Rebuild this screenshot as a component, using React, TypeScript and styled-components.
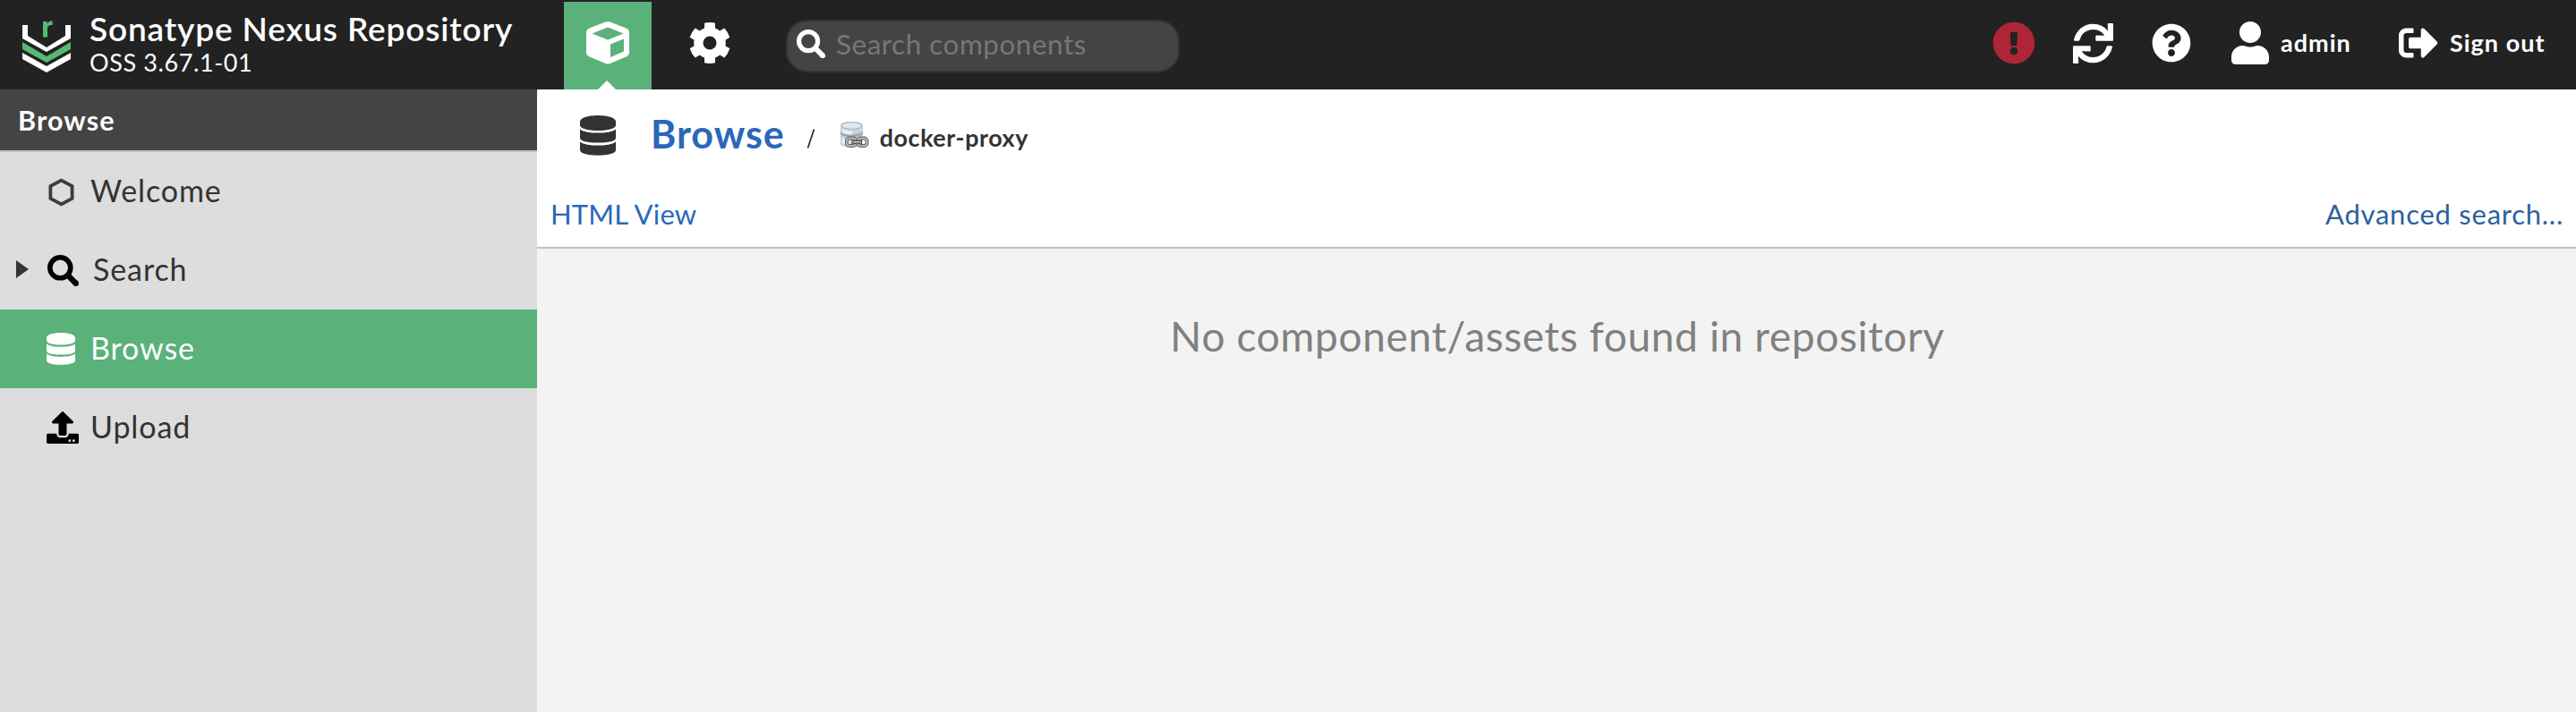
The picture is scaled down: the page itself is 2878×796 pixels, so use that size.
import React from "react";
import styled, { createGlobalStyle } from "styled-components";
import {
  FaExclamationCircle,
  FaQuestionCircle,
  FaSignOutAlt,
  FaSync,
  FaUpload,
  FaUser,
} from "react-icons/fa";

const GlobalStyle = createGlobalStyle`
  * { box-sizing: border-box; }
  body {
    margin: 0;
    background: #f3f3f3;
    color: #333;
    font-family: Lato, "Open Sans", sans-serif;
  }
  svg { display: block; flex: none; }
`;

const Page = styled.div`
  display: flex;
  flex-direction: column;
  height: 100vh;
  min-height: 796px;
  overflow: hidden;
`;

/* ---------- header ---------- */

const Header = styled.header`
  display: flex;
  flex: none;
  height: 100px;
  background: #222;
  color: #fff;
`;

const Brand = styled.div`
  display: flex;
  width: 630px;
  padding: 12px 0 0 25px;
`;

const BrandMark = styled.svg`
  width: 54px;
  height: 58px;
  margin: 11px 21px 0 0;
`;

const ProductName = styled.div`
  font-size: 37px;
  line-height: 40px;
  font-weight: 600;
  letter-spacing: 0.85px;
  white-space: nowrap;
`;

const ProductVersion = styled.div`
  font-size: 27px;
  line-height: 36px;
  letter-spacing: 0.6px;
`;

const ModeTab = styled.button<{ $active?: boolean }>`
  position: relative;
  display: flex;
  align-items: center;
  justify-content: center;
  width: 98px;
  height: 98px;
  margin: 2px 16px 0 0;
  padding: 0 0 6px;
  border: 0;
  color: #fff;
  background: ${(p) => (p.$active ? "#5ab17a" : "transparent")};

  &::after {
    content: "";
    display: ${(p) => (p.$active ? "block" : "none")};
    position: absolute;
    left: 38px;
    bottom: 0;
    border: solid transparent;
    border-width: 0 10px 10px;
    border-bottom-color: #fff;
  }
`;

const SearchBox = styled.label`
  display: flex;
  align-items: center;
  width: 440px;
  height: 59px;
  margin: 22px 0 0 20px;
  padding: 0 20px 5px 10px;
  border: 2px solid #333;
  border-radius: 24px;
  background: #444;
`;

const SearchInput = styled.input`
  flex: 1;
  min-width: 0;
  height: 50px;
  margin-left: 11px;
  padding: 0;
  border: 0;
  outline: 0;
  background: transparent;
  color: #fff;
  font: 31.5px/50px Lato, sans-serif;
  letter-spacing: 0.5px;

  &::placeholder {
    color: #777;
    opacity: 1;
  }
`;

const Actions = styled.div`
  display: flex;
  margin-left: auto;
  padding-bottom: 4px;
`;

const Action = styled.button<{ $width: number; $color?: string }>`
  display: flex;
  align-items: center;
  gap: 13px;
  width: ${(p) => p.$width}px;
  padding: 0;
  border: 0;
  background: transparent;
  color: ${(p) => p.$color || "#fff"};
  font: 700 27px/40px Lato, sans-serif;
  letter-spacing: 1px;
  white-space: nowrap;
`;

const UserIcon = styled(FaUser)`
  margin: 0 -3px;
`;

/* ---------- body ---------- */

const Body = styled.div`
  display: flex;
  flex: 1;
  min-height: 0;
`;

const Sidebar = styled.nav`
  flex: none;
  width: 600px;
  background: #ddd;
`;

const SidebarTitle = styled.div`
  height: 70px;
  padding-left: 20px;
  border-bottom: 2px solid #bfbfbf;
  background: #444;
  color: #fff;
  font-size: 30.5px;
  font-weight: 700;
  line-height: 68px;
  letter-spacing: 1.1px;
`;

const NavItem = styled.a<{ $selected?: boolean }>`
  display: flex;
  align-items: center;
  height: 88px;
  background: ${(p) => (p.$selected ? "#5ab17a" : "transparent")};
  color: ${(p) => (p.$selected ? "#fff" : "#333")};
`;

const Expander = styled.span<{ $visible?: boolean }>`
  width: 14px;
  height: 20px;
  margin: 0 20px 2px 18px;
  background: ${(p) => (p.$visible ? "#333" : "transparent")};
  clip-path: polygon(0 0, 100% 50%, 0 100%);
`;

const NavIcon = styled.span<{ $black?: boolean; $nudge?: number }>`
  display: flex;
  width: 49px;
  padding: ${(p) => p.$nudge || 0}px 0 0 ${(p) => p.$nudge || 0}px;
  color: ${(p) => (p.$black ? "#000" : "inherit")};
`;

const NavLabel = styled.span<{ $indent?: boolean }>`
  padding: 0 0 2px ${(p) => (p.$indent ? 3 : 0)}px;
  font-size: 34px;
  line-height: 40px;
  letter-spacing: 0.9px;
`;

const Content = styled.main`
  flex: 1;
  min-width: 0;
  background: #f3f3f3;
`;

const ContentHead = styled.div`
  height: 178px;
  border-bottom: 2px solid #c0c0c0;
  background: #fff;
`;

const Breadcrumb = styled.div`
  display: flex;
  align-items: center;
  height: 104px;
  padding: 0 0 2px 48px;
`;

const CrumbLink = styled.a`
  margin-left: 39px;
  padding-bottom: 3px;
  color: #2a68b9;
  font-size: 43px;
  font-weight: 700;
  line-height: 50px;
  letter-spacing: 1px;
`;

const CrumbSlash = styled.svg`
  width: 10px;
  height: 22px;
  margin: 7px 27px 0 24px;
`;

const CrumbCurrent = styled.span`
  margin-left: 12px;
  padding-top: 5px;
  font-size: 27px;
  font-weight: 700;
  line-height: 40px;
  letter-spacing: 0.5px;
`;

const LinkBar = styled.div`
  display: flex;
  align-items: center;
  justify-content: space-between;
  height: 72px;
  padding: 0 14px 3px 15px;
`;

const BarLink = styled.a<{ $spacing: number; $dark?: boolean }>`
  color: ${(p) => (p.$dark ? "#2b629f" : "#2a68b9")};
  font-size: 31px;
  line-height: 40px;
  letter-spacing: ${(p) => p.$spacing}px;
`;

const EmptyMessage = styled.p`
  margin: 68px 0 0;
  padding-left: 2px;
  color: #808080;
  font-size: 46px;
  line-height: 60px;
  letter-spacing: 0.65px;
  text-align: center;
`;

/* ---------- icons ---------- */

const Cube = () => (
  <svg width="48" height="48" viewBox="0 0 48 48" fill="currentColor">
    <path
      fillRule="evenodd"
      d="M21.500.6Q24-.3 26.500.6L44.500 7.500Q48 9 48 12.500V35Q48 37.500 45.500 39L26.500 47Q24 48 21.500 47L2.500 39Q0 37.500 0 35V12.500Q0 9 3.500 7.500ZM24 6.500 6.500 13.500 24 20.500 41.500 13.500ZM27 25.500V40L42 33.500V19.500Z"
    />
  </svg>
);

const Magnifier = ({ size }: { size: number }) => (
  <svg width={size} height={size} viewBox="0 0 36 36" fill="none" stroke="currentColor">
    <circle cx="14.3" cy="14.3" r="11.5" strokeWidth="5.6" />
    <path d="M23.5 23.5 32 32" strokeWidth="6.4" />
    <path d="M31.8 31.8h.01" strokeWidth="6.4" strokeLinecap="round" />
  </svg>
);

const Gear = () => (
  <svg width="46" height="46" viewBox="-23 -23 46 46" fill="currentColor">
    <path
      fillRule="evenodd"
      d="M-6-22.3Q0-23.6 6-22.3V-16.6Q8.700-15.500 11.200-13.500L16.300-16.500Q20.600-12 22.300-6.200L17.400-3.200Q18.300 0 17.400 3.200L22.300 6.200Q20.600 12 16.300 16.500L11.200 13.500Q8.700 15.500 6 16.600V22.300Q0 23.600-6 22.300V16.600Q-8.700 15.500-11.200 13.500L-16.300 16.500Q-20.600 12-22.300 6.200L-17.400 3.200Q-18.300 0-17.400-3.200L-22.300-6.200Q-20.600-12-16.300-16.500L-11.200-13.500Q-8.700-15.500-6-16.600ZM7.500 0A7.500 7.500 0 1 0-7.500 0A7.500 7.500 0 1 0 7.500 0Z"
    />
  </svg>
);

const Database = ({ width, height }: { width: number; height: number }) => (
  <svg width={width} height={height} viewBox="0 0 40 45" preserveAspectRatio="none" fill="currentColor">
    <path d="M0 7C0 3 8 0 20 0s20 3 20 7v4c0 3.600-8 6-20 6S0 14.600 0 11Z" />
    <path d="M0 15.500C4 18.500 11 19.600 20 19.600s16-1.100 20-4.100v9.700c0 3.400-8 5.400-20 5.400S0 28.600 0 25.200Z" />
    <path d="M0 29.500C4 32.500 11 33.600 20 33.600s16-1.100 20-4.100v9c0 4-8 6.200-20 6.200S0 42.500 0 38.500Z" />
  </svg>
);

const Hexagon = () => (
  <svg width="30" height="32" viewBox="0 0 30 32" fill="none" stroke="#3c3c3c" strokeWidth="3.800">
    <path d="M14.500 2.600 26.600 9.200V22.800L14.500 29.400 2.400 22.800V9.200Z" />
  </svg>
);

const ProxyRepository = () => (
  <svg width="33" height="32" viewBox="0 0 33 32">
    <path d="M1 5C1 2.200 6 1 13.500 1S26 2.200 26 5V26c0 2.500-5 3.500-12.500 3.500S1 28.500 1 26Z" fill="#cbd4dd" />
    <path d="M1 12c2 2.500 7 3.200 12.500 3.200S24 14.500 26 12v3c-2 2.500-7 3.200-12.500 3.200S3 17.500 1 15Z" fill="#9ea9b0" />
    <path d="M3 9c3 2 7 2.500 11 2.500v4c-5 0-9-.5-11-2.500ZM3 19c3 2 6 2 9 2v6c-4 0-7-.5-9-2Z" fill="#e9eff5" />
    <ellipse cx="13.500" cy="5.500" rx="11.500" ry="3.800" fill="#dfe6ef" stroke="#a5afb6" />
    <g fill="none">
      <rect x="8" y="19.500" width="10" height="8.500" rx="3" stroke="#6a6a6a" strokeWidth="4" />
      <rect x="20.500" y="19.500" width="10" height="8.500" rx="3" stroke="#6a6a6a" strokeWidth="4" />
      <rect x="8" y="19.500" width="10" height="8.500" rx="3" stroke="#c4c4c4" strokeWidth="1.500" />
      <rect x="20.500" y="19.500" width="10" height="8.500" rx="3" stroke="#c4c4c4" strokeWidth="1.500" />
      <path d="M13.500 23.800h11.500" stroke="#4c4c4c" strokeWidth="4" />
      <path d="M14.500 23.800h9.500" stroke="#d0d0d0" strokeWidth="1.500" />
    </g>
  </svg>
);

const Logo = () => (
  <BrandMark viewBox="0 0 54 58">
    <path d="M0 5h6v12l21 13 21-13V5h6v15L27 35 0 20Z" fill="#fff" />
    <path d="M0 24 27 40 54 24v8L27 47 0 32Z" fill="#57b974" />
    <path d="M0 36 27 51 54 36v7L27 58 0 43Z" fill="#fff" />
    <path d="M23 1h4.600v2.300Q30 0 33.500.3V5Q28 4.600 28 8.800V18.500H23Z" fill="#57b974" />
  </BrandMark>
);

export default function App() {
  return (
    <Page>
      <GlobalStyle />
      <Header>
        <Brand>
          <Logo />
          <div>
            <ProductName>Sonatype Nexus Repository</ProductName>
            <ProductVersion>OSS 3.67.1-01</ProductVersion>
          </div>
        </Brand>
        <ModeTab $active aria-label="Browse">
          <Cube />
        </ModeTab>
        <ModeTab aria-label="Administration">
          <Gear />
        </ModeTab>
        <SearchBox>
          <Magnifier size={33} />
          <SearchInput placeholder="Search components" />
        </SearchBox>
        <Actions>
          <Action $width={89.5} $color="#ad2536" aria-label="Alerts">
            <FaExclamationCircle size={48} />
          </Action>
          <Action $width={88.5} aria-label="Refresh">
            <FaSync size={45} />
          </Action>
          <Action $width={89} aria-label="Help">
            <FaQuestionCircle size={44} />
          </Action>
          <Action $width={187}>
            <UserIcon size={48} />
            admin
          </Action>
          <Action $width={198}>
            <FaSignOutAlt size={44} />
            Sign out
          </Action>
        </Actions>
      </Header>
      <Body>
        <Sidebar>
          <SidebarTitle>Browse</SidebarTitle>
          <NavItem>
            <Expander />
            <NavIcon $nudge={2}><Hexagon /></NavIcon>
            <NavLabel>Welcome</NavLabel>
          </NavItem>
          <NavItem>
            <Expander $visible />
            <NavIcon $black $nudge={1}><Magnifier size={36} /></NavIcon>
            <NavLabel $indent>Search</NavLabel>
          </NavItem>
          <NavItem $selected>
            <Expander />
            <NavIcon><Database width={32} height={36} /></NavIcon>
            <NavLabel>Browse</NavLabel>
          </NavItem>
          <NavItem>
            <Expander />
            <NavIcon $black><FaUpload size={36} /></NavIcon>
            <NavLabel>Upload</NavLabel>
          </NavItem>
        </Sidebar>
        <Content>
          <ContentHead>
            <Breadcrumb>
              <Database width={40} height={45} />
              <CrumbLink>Browse</CrumbLink>
              <CrumbSlash viewBox="0 0 10 22" stroke="#333" strokeWidth="1.8">
                <path d="M1.500 21.500 8.500.5" />
              </CrumbSlash>
              <ProxyRepository />
              <CrumbCurrent>docker-proxy</CrumbCurrent>
            </Breadcrumb>
            <LinkBar>
              <BarLink $spacing={0.2}>HTML View</BarLink>
              <BarLink $spacing={0.75} $dark>Advanced search...</BarLink>
            </LinkBar>
          </ContentHead>
          <EmptyMessage>No component/assets found in repository</EmptyMessage>
        </Content>
      </Body>
    </Page>
  );
}
